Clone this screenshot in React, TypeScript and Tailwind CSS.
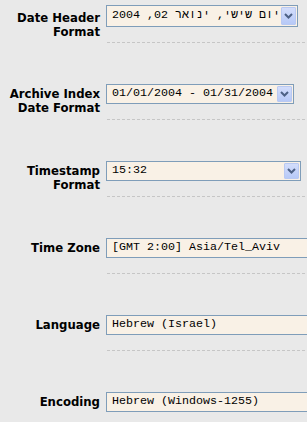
import React from "react";

const labelFont = {
  fontFamily: "'DejaVu Sans Condensed', 'DejaVu Sans', sans-serif",
};
const monoFont = {
  fontFamily: "'Liberation Mono', 'DejaVu Sans Mono', monospace",
};

function Arrow() {
  return (
    <div className="my-px mr-px w-[15px] shrink-0 flex items-center justify-center rounded-[1px] border border-[#b9c9f2] bg-gradient-to-b from-[#d3ddfb] to-[#b7c9f7]">
      <svg width="9" height="6" viewBox="0 0 9 6">
        <path d="M1 1 L4.5 4.5 L8 1" fill="none" stroke="#4d6185" strokeWidth="2" />
      </svg>
    </div>
  );
}

function Box({
  value,
  select,
  width,
  tall,
}: {
  value: string;
  select?: boolean;
  width: string;
  tall?: boolean;
}) {
  return (
    <div
      className={`flex border border-[#7f9db9] bg-[#f9f1e6] ${tall ? "h-[22px]" : "h-[20px]"} ${width}`}
    >
      <div
        className="flex-1 flex items-center pl-[5px] text-[11.67px] text-black whitespace-nowrap overflow-hidden"
        style={monoFont}
      >
        {value}
      </div>
      {select && <Arrow />}
    </div>
  );
}

function Row({
  label,
  children,
  first,
}: {
  label: React.ReactNode;
  children: React.ReactNode;
  first?: boolean;
}) {
  return (
    <div className="flex">
      <div
        className={`w-[100px] shrink-0 text-right font-bold text-[13px] leading-[14px] text-black ${first ? "pt-[6px]" : "pt-[3px]"}`}
        style={labelFont}
      >
        {label}
      </div>
      <div className="flex-1 ml-[6px] min-w-0">
        {children}
        <div className="mt-[15px] ml-px h-px bg-[repeating-linear-gradient(90deg,#c6c6c6_0_3px,transparent_3px_5px)]" />
      </div>
    </div>
  );
}

export default function App() {
  return (
    <div className="w-full h-[422px] overflow-hidden bg-[#e9e9e9] pt-[5px] flex flex-col gap-[41px]">
      <Row
        first
        label={
          <>
            Date Header
            <br />
            Format
          </>
        }
      >
        <Box value="יום שישי, ינואר 02, 2004" select width="w-[192px]" tall />
      </Row>
      <Row
        label={
          <>
            Archive Index
            <br />
            Date Format
          </>
        }
      >
        <Box value="01/01/2004 - 01/31/2004" select width="w-[188px]" />
      </Row>
      <Row
        label={
          <>
            Timestamp
            <br />
            Format
          </>
        }
      >
        <Box value="15:32" select width="w-[195px]" />
      </Row>
      <Row label="Time Zone">
        <Box value="[GMT 2:00] Asia/Tel_Aviv" width="w-[240px]" />
      </Row>
      <Row label="Language">
        <Box value="Hebrew (Israel)" width="w-[240px]" />
      </Row>
      <Row label="Encoding">
        <Box value="Hebrew (Windows-1255)" width="w-[240px]" />
      </Row>
    </div>
  );
}
